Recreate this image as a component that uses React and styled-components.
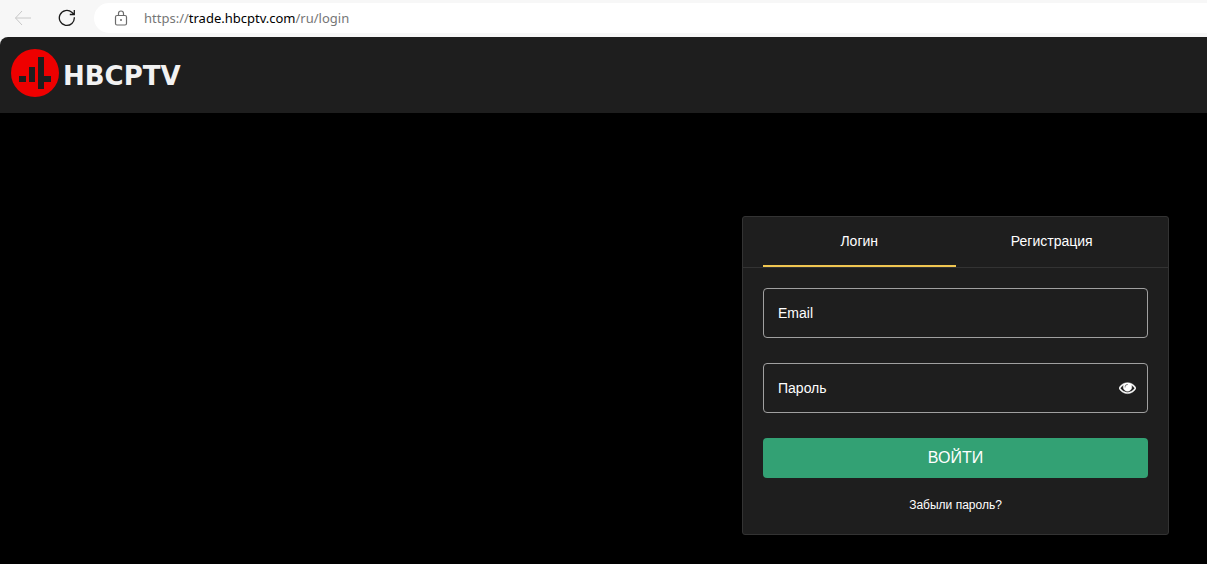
import React, { useState } from "react";
import styled, { createGlobalStyle } from "styled-components";

const App = () => {
  const [tab, setTab] = useState("login");
  const [email, setEmail] = useState("");
  const [password, setPassword] = useState("");
  const [visible, setVisible] = useState(false);

  return (
    <Page>
      <GlobalStyle />
      <BrowserBar>
        <BarButton type="button" aria-label="Back" disabled>
          <svg width="18" height="16" viewBox="0 0 18 16" fill="none" stroke="#c8c8c8">
            <path d="M8 1 1.500 8 8 15M1.500 8H17" />
          </svg>
        </BarButton>
        <BarButton type="button" aria-label="Reload">
          <svg width="18" height="18" viewBox="0 0 18 18" fill="none" stroke="#1b1b1b" strokeWidth="1.300">
            <path d="M16.300 8.200A7.500 7.500 0 1 1 13.800 3.300L16 5.200M16.300 1v4.500h-4.500" />
          </svg>
        </BarButton>
        <AddressBar>
          <svg width="14" height="16" viewBox="0 0 14 16" fill="none" stroke="#6b6b6b" strokeWidth="1.200">
            <rect x="1.500" y="5.500" width="11" height="9.500" rx="1.500" />
            <path d="M4.500 5.500V3.500a2.500 2.500 0 0 1 5 0v2" />
            <circle cx="7" cy="10" r="1" fill="#6b6b6b" stroke="none" />
          </svg>
          <Url>
            https://<strong>trade.hbcptv.com</strong>/ru/login
          </Url>
        </AddressBar>
      </BrowserBar>

      <Header>
        <Logo href="#">
          <svg width="48" height="48" viewBox="0 0 48 48" aria-hidden="true">
            <circle cx="24" cy="24" r="24" fill="#ee0000" />
            <path d="M8 27h7v6H8zM18 18h6v15h-6zM27 8h6v19h7v6h-7v7h-6z" fill="#1e1e1e" />
          </svg>
          <Brand>HBCPTV</Brand>
        </Logo>
      </Header>

      <Main>
        <Card>
          <Tabs role="tablist">
            <Tab type="button" role="tab" aria-selected={tab === "login"} $active={tab === "login"} onClick={() => setTab("login")}>
              Логин
            </Tab>
            <Tab type="button" role="tab" aria-selected={tab === "signup"} $active={tab === "signup"} onClick={() => setTab("signup")}>
              Регистрация
            </Tab>
          </Tabs>
          <Form onSubmit={(e) => e.preventDefault()}>
            <Field>
              <Input type="email" aria-label="Email" placeholder="Email" value={email} onChange={(e) => setEmail(e.target.value)} />
            </Field>
            <Field>
              <Input
                type={visible ? "text" : "password"}
                aria-label="Пароль"
                placeholder="Пароль"
                value={password}
                onChange={(e) => setPassword(e.target.value)}
              />
              <EyeButton type="button" aria-label="Показать пароль" onClick={() => setVisible(!visible)}>
                <svg width="17" height="17" viewBox="0 100 1792 1792" fill="#fff" stroke="#fff" strokeWidth="50">
                  <path d="M1664 960q-152-236-381-353 61 104 61 225 0 185-131.500 316.500t-316.500 131.500-316.500-131.500-131.500-316.500q0-121 61-225-229 117-381 353 133 205 333.500 326.500t434.500 121.500 434.500-121.500 333.500-326.500zm-720-384q0-20-14-34t-34-14q-125 0-214.500 89.500t-89.500 214.500q0 20 14 34t34 14 34-14 14-34q0-86 61-147t147-61q20 0 34-14t14-34zm848 384q0 34-20 69-140 230-376.500 368.500t-499.500 138.500-499.500-139-376.500-368q-20-35-20-69t20-69q140-229 376.500-368t499.500-139 499.500 139 376.500 368q20 35 20 69z" />
                </svg>
              </EyeButton>
            </Field>
            <Submit type="submit">ВОЙТИ</Submit>
            <Forgot href="#">Забыли пароль?</Forgot>
          </Form>
        </Card>
      </Main>
    </Page>
  );
};

const GlobalStyle = createGlobalStyle`
  * {
    box-sizing: border-box;
  }

  body {
    margin: 0;
    background: #000;
    font-family: "Liberation Sans", Arial, sans-serif;
    color: #fff;
  }

  button,
  input {
    font-family: inherit;
    color: inherit;
  }

  svg {
    display: block;
    flex-shrink: 0;
  }
`;

const Page = styled.div`
  min-height: 100vh;
  background: #000;
`;

const BrowserBar = styled.div`
  display: flex;
  align-items: center;
  height: 37px;
  padding: 0 0 2px 14px;
  background: #f7f7f7;
`;

const BarButton = styled.button`
  display: flex;
  align-items: center;
  width: 18px;
  height: 32px;
  margin-right: 26px;
  padding: 0;
  border: none;
  background: none;
`;

const AddressBar = styled.div`
  display: flex;
  flex: 1;
  align-items: center;
  gap: 16px;
  height: 30px;
  margin-left: -8px;
  padding-left: 20px;
  border-radius: 15px 0 0 15px;
  background: #fff;
`;

const Url = styled.span`
  font-family: "Noto Sans", "Segoe UI", sans-serif;
  font-size: 13px;
  line-height: 20px;
  color: #767676;

  strong {
    font-weight: 400;
    color: #000;
  }
`;

const Header = styled.header`
  display: flex;
  align-items: center;
  height: 76px;
  padding: 0 11px 4px;
  border-top-left-radius: 8px;
  background: #1e1e1e;
  box-shadow: -8px -8px 0 #f7f7f7;
`;

const Logo = styled.a`
  display: flex;
  align-items: center;
  gap: 4px;
  color: #f2f2f2;
  text-decoration: none;
`;

const Brand = styled.span`
  padding-top: 6px;
  font-family: "DejaVu Sans", sans-serif;
  font-size: 26px;
  font-weight: 700;
  line-height: 32px;
`;

const Main = styled.main`
  display: flex;
  justify-content: flex-end;
  padding: 103px 38px 29px;
`;

const Card = styled.section`
  width: 100%;
  max-width: 427px;
  border: 1px solid #333;
  border-radius: 3px;
  background: #1e1e1e;
`;

const Tabs = styled.div`
  display: flex;
  padding: 0 20px;
  border-bottom: 1px solid #333;
`;

const Tab = styled.button`
  flex: 1;
  height: 50px;
  padding: 0;
  border: none;
  border-bottom: 2px solid ${({ $active }) => ($active ? "#f0c651" : "transparent")};
  background: none;
  font-size: 14px;
  cursor: pointer;
`;

const Form = styled.form`
  display: flex;
  flex-direction: column;
  padding: 20px;
`;

const Field = styled.div`
  display: flex;
  align-items: center;
  height: 50px;
  margin-bottom: 25px;
  border: 1px solid #a0a0a0;
  border-radius: 4px;
`;

const Input = styled.input`
  flex: 1;
  min-width: 0;
  height: 100%;
  padding: 0 14px;
  border: none;
  outline: none;
  background: none;
  font-size: 14px;

  &::placeholder {
    color: #fff;
    opacity: 1;
  }
`;

const EyeButton = styled.button`
  padding: 0;
  margin-right: 11px;
  border: none;
  background: none;
  cursor: pointer;
`;

const Submit = styled.button`
  height: 40px;
  border: none;
  border-radius: 4px;
  background: #33a174;
  font-size: 16px;
  cursor: pointer;
`;

const Forgot = styled.a`
  align-self: center;
  margin-top: 18px;
  font-size: 12px;
  line-height: 18px;
  color: #fff;
  text-decoration: none;
`;

export default App;
